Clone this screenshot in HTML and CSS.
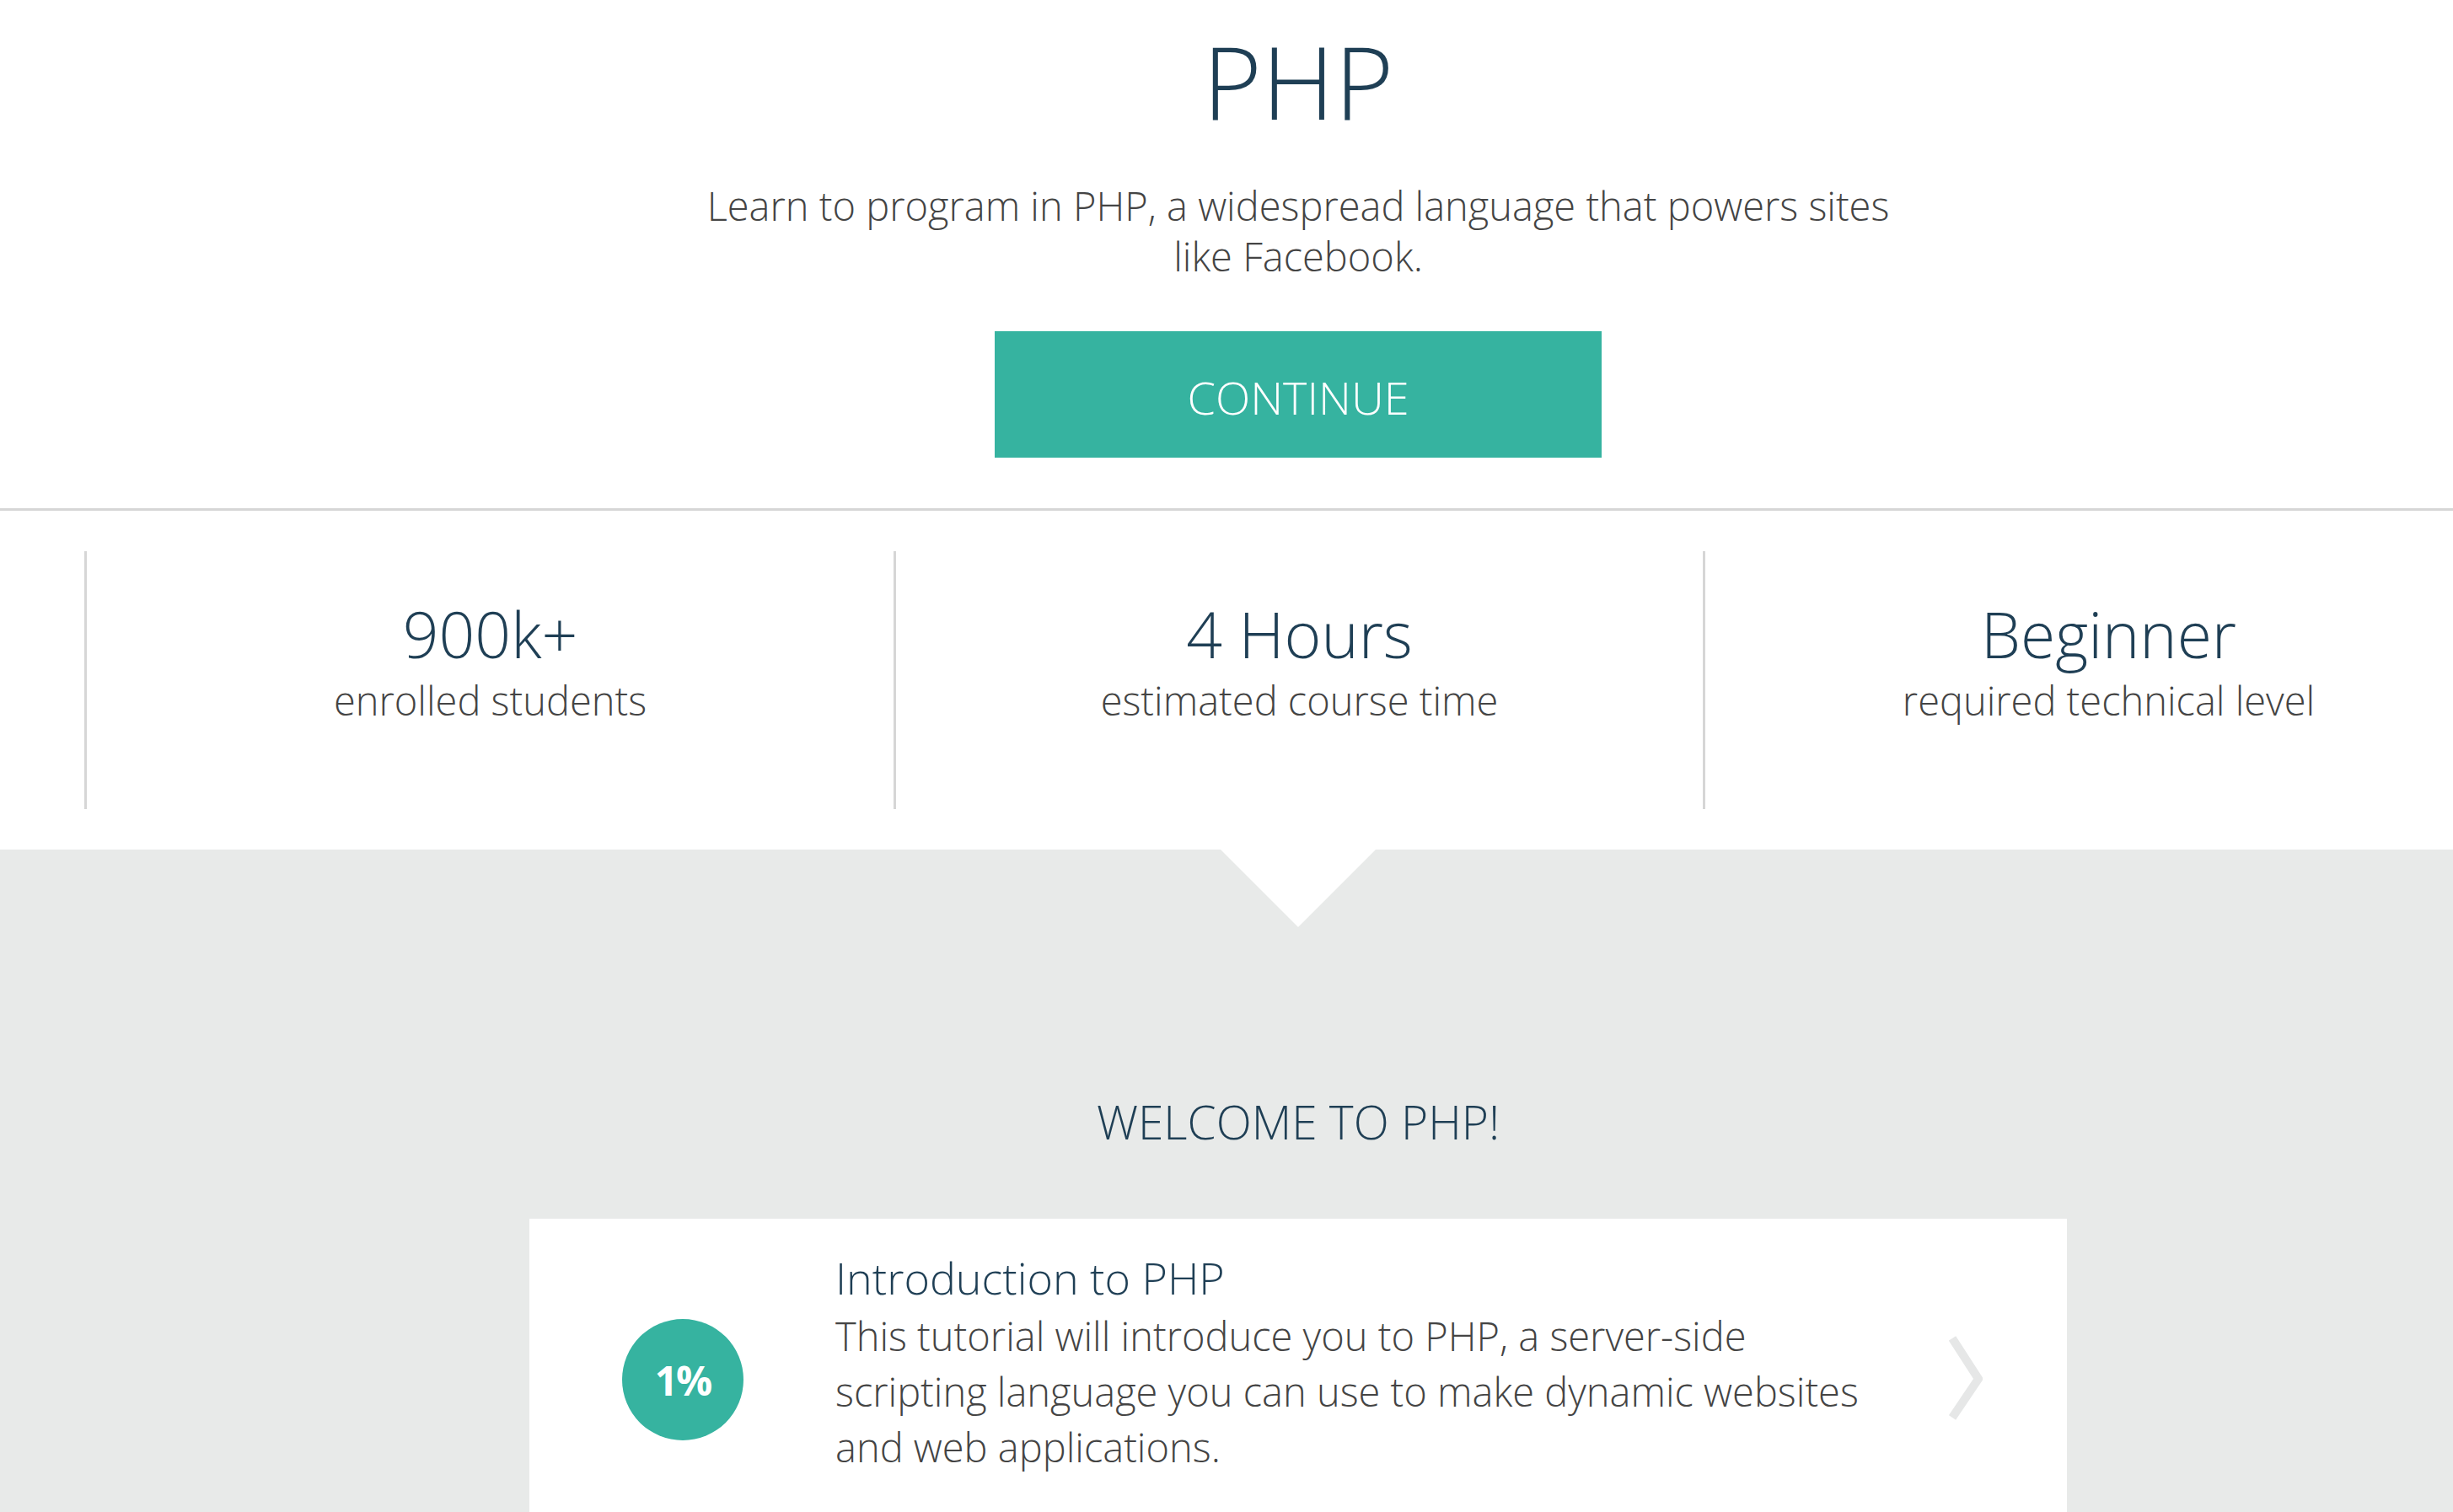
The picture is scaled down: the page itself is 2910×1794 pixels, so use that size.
FILE: index.html
```html
<!DOCTYPE html>
<html lang="en">
<head>
<meta charset="utf-8">
<title>PHP</title>
<link rel="stylesheet" href="styles.css">
</head>
<body>
<div class="page">
  <header class="hero">
    <h1 class="hero-title">PHP</h1>
    <p class="hero-sub">Learn to program in PHP, a widespread language that powers sites like Facebook.</p>
    <a class="btn" href="#">CONTINUE</a>
  </header>

  <section class="stats">
    <div class="stat">
      <div class="stat-value">900k+</div>
      <div class="stat-label">enrolled students</div>
    </div>
    <div class="stat">
      <div class="stat-value">4 Hours</div>
      <div class="stat-label">estimated course time</div>
    </div>
    <div class="stat">
      <div class="stat-value">Beginner</div>
      <div class="stat-label">required technical level</div>
    </div>
  </section>

  <section class="course">
    <span class="pointer"></span>
    <h2 class="course-heading">WELCOME TO PHP!</h2>
    <div class="lesson-card">
      <div class="progress">1%</div>
      <div class="lesson-body">
        <h3 class="lesson-title">Introduction to PHP</h3>
        <p class="lesson-desc">This tutorial will introduce you to PHP, a server-side scripting language you can use to make dynamic websites and web applications.</p>
      </div>
      <svg class="chevron" width="40" height="104" viewBox="0 0 40 104" aria-hidden="true">
        <polyline points="4,4 35,52 4,98" fill="none" stroke="#e6e7e7" stroke-width="10" stroke-linejoin="miter"/>
      </svg>
    </div>
  </section>
</div>
</body>
</html>
```

FILE: styles.css
```css
html {
  overflow: hidden;
}

body {
  margin: 0;
  background: #ffffff;
  font-family: "Open Sans", "Noto Sans", sans-serif;
  font-weight: 300;
  color: #444444;
}

.page {
  width: 3080px;
}

/* Hero */
.hero {
  display: flex;
  flex-direction: column;
  align-items: center;
  text-align: center;
  padding: 36px 0 60px;
  border-bottom: 3px solid #d6d6d6;
}

.hero-title {
  margin: 0;
  font-size: 120px;
  line-height: 120px;
  font-weight: 300;
  color: #1f3f55;
}

.hero-sub {
  margin: 58px 0 0;
  width: 1450px;
  font-size: 47px;
  line-height: 60px;
  color: #444444;
}

.btn {
  display: block;
  margin-top: 59px;
  width: 720px;
  height: 150px;
  background: #36b3a0;
  color: #ffffff;
  font-size: 54px;
  line-height: 156px;
  text-align: center;
  text-decoration: none;
}

/* Stats */
.stats {
  display: flex;
  padding: 48px 100px;
}

.stat {
  width: 960px;
  height: 306px;
  box-sizing: border-box;
  border-left: 3px solid #d6d6d6;
  padding-top: 60px;
  text-align: center;
}

.stat-value {
  font-size: 75px;
  line-height: 76px;
  color: #1f3f55;
}

.stat-label {
  margin-top: 11px;
  font-size: 47px;
  line-height: 60px;
  color: #444444;
}

/* Course section */
.course {
  position: relative;
  background: #e8eae9;
  padding-top: 295px;
  padding-bottom: 40px;
  text-align: center;
}

.pointer {
  position: absolute;
  top: 0;
  left: 50%;
  margin-left: -92px;
  width: 0;
  height: 0;
  border-left: 92px solid transparent;
  border-right: 92px solid transparent;
  border-top: 92px solid #ffffff;
}

.course-heading {
  margin: 0;
  font-size: 55px;
  line-height: 56px;
  font-weight: 300;
  color: #1f3f55;
}

.lesson-card {
  display: flex;
  align-items: flex-start;
  width: 1824px;
  box-sizing: border-box;
  margin: 87px auto 0;
  padding: 40px 100px 80px 110px;
  background: #ffffff;
  text-align: left;
}

.progress {
  flex-shrink: 0;
  display: flex;
  align-items: center;
  justify-content: center;
  width: 144px;
  height: 144px;
  margin-top: 79px;
  border-radius: 50%;
  background: #36b3a0;
  color: #ffffff;
  font-size: 48px;
  font-weight: 700;
  letter-spacing: -2px;
}

.lesson-body {
  margin-left: 109px;
  width: 1255px;
}

.lesson-title {
  margin: 0;
  font-size: 52px;
  line-height: 60px;
  font-weight: 300;
  color: #1f3f55;
}

.lesson-desc {
  margin: 6px 0 0;
  font-size: 47px;
  line-height: 66px;
  color: #444444;
}

.chevron {
  flex-shrink: 0;
  margin-left: auto;
  margin-top: 98px;
}
```
